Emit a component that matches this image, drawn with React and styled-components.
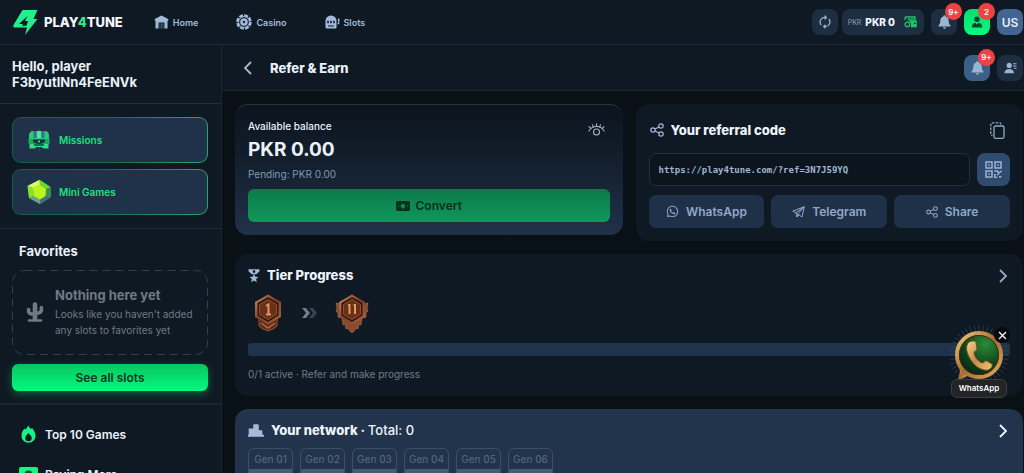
import React from "react";
import styled, { createGlobalStyle } from "styled-components";
import { FaWhatsapp } from "react-icons/fa";

const GlobalStyle = createGlobalStyle`
	* {
		box-sizing: border-box;
	}
	body {
		margin: 0;
		background-color: #091016;
		color: #e9f1fa;
		font-family: Inter, "Liberation Sans", sans-serif;
	}
	button,
	input {
		font-family: inherit;
		margin: 0;
	}
	svg {
		display: block;
		flex: none;
	}
`;

const Page = styled.div`
	display: flex;
	flex-direction: column;
	height: 100vh;
	overflow: hidden;
`;

/* header */
const Header = styled.header`
	display: flex;
	align-items: center;
	flex: none;
	height: 45px;
	padding: 0 1px 0 13px;
	background-color: #0f1923;
	border-bottom: 1px solid #1d2a37;
`;
const Logo = styled.a`
	display: flex;
	align-items: center;
	gap: 6px;
	color: #f4f8fc;
	font-size: 13px;
	font-weight: 800;
	text-decoration: none;
	span span {
		color: #2eea8b;
	}
`;
const Nav = styled.nav`
	display: flex;
	flex: 1;
	gap: 38px;
	margin-left: 31px;
`;
const NavLink = styled.a`
	display: flex;
	align-items: center;
	gap: 4px;
	color: #a3bbdb;
	font-size: 9px;
	font-weight: 600;
	text-decoration: none;
`;
const Actions = styled.div`
	display: flex;
	align-items: center;
	gap: 7px;
`;
const Wallet = styled.div`
	display: flex;
	gap: 4px;
`;
const IconButton = styled.button`
	position: relative;
	display: flex;
	align-items: center;
	justify-content: center;
	width: 26px;
	height: 26px;
	padding: 0;
	border: none;
	border-radius: 8px;
	background: ${(props) => props.$bg || "#1e2e41"};
	color: ${(props) => props.$color || "#9bb4d3"};
	font-size: 12px;
	font-weight: 600;
	cursor: pointer;
`;
const Balance = styled.button`
	display: flex;
	align-items: center;
	gap: 4px;
	height: 26px;
	padding: 0 7px 0 6px;
	border: none;
	border-radius: 8px;
	background-color: #1e2e41;
	color: #f1f6fc;
	font-size: 10px;
	font-weight: 800;
	cursor: pointer;
	small {
		color: #8ba0b8;
		font-size: 7px;
		font-weight: 400;
	}
	svg {
		margin-left: 5px;
	}
`;
const Badge = styled.span`
	position: absolute;
	top: -6px;
	right: -5px;
	display: flex;
	align-items: center;
	justify-content: center;
	width: 17px;
	height: 17px;
	border-radius: 50%;
	background-color: #ef4343;
	color: #fff;
	font-size: 8px;
	font-weight: 600;
`;

const Body = styled.div`
	display: flex;
	flex: 1;
	min-height: 0;
`;

/* sidebar */
const Sidebar = styled.aside`
	flex: none;
	width: 222px;
	overflow: auto;
	scrollbar-width: none;
	background-color: #0f1923;
	border-right: 1px solid #1a2733;
`;
const Greeting = styled.div`
	padding: 13px 13px 13px 12px;
	border-bottom: 1px solid #1f3040;
	font-size: 13px;
	font-weight: 700;
	line-height: 16px;
`;
const Promos = styled.div`
	display: flex;
	flex-direction: column;
	gap: 6px;
	padding: 13px 13px 13px 12px;
	border-bottom: 1px solid #1f2c39;
`;
const Promo = styled.button`
	display: flex;
	align-items: center;
	gap: 7px;
	height: 46px;
	padding: 0 13px;
	border: 1px solid transparent;
	border-radius: 9px;
	background: linear-gradient(#20314a, #20314a) padding-box,
		linear-gradient(90deg, #146040, #16704a 50%, #2ea36b) border-box;
	color: #1fe07d;
	font-size: 10px;
	font-weight: 600;
	cursor: pointer;
`;
const Favorites = styled.section`
	padding: 13px 13px 12px 12px;
	border-bottom: 2px solid #182634;
`;
const FavTitle = styled.h2`
	margin: 0 0 10px 7px;
	font-size: 13px;
	font-weight: 700;
	line-height: 18px;
`;
const Empty = styled.div`
	position: relative;
	display: flex;
	align-items: center;
	gap: 11px;
	height: 85px;
	padding: 0 14px 2px;
	color: #6f7984;
`;
const DashFrame = styled.svg`
	position: absolute;
	inset: 0;
	width: 100%;
	height: 100%;
	rect {
		width: calc(100% - 1px);
		height: calc(100% - 1px);
	}
`;
const EmptyText = styled.div`
	h3 {
		margin: 0;
		font-size: 13px;
		font-weight: 700;
		line-height: 18px;
	}
	p {
		margin: 2px 0 0;
		font-size: 10px;
		line-height: 16px;
		white-space: nowrap;
	}
`;
const SeeAll = styled.button`
	width: 100%;
	height: 27px;
	margin-top: 9px;
	border: none;
	border-radius: 6px;
	background: linear-gradient(#08c561, #04f97d);
	box-shadow: 0 3px 8px #04f97d55;
	color: #06351f;
	font-size: 12px;
	font-weight: 600;
	cursor: pointer;
`;
const Menu = styled.nav`
	padding: 9px 19px;
`;
const MenuLink = styled.a`
	display: flex;
	align-items: center;
	gap: 7px;
	height: 40px;
	color: #eaf2fb;
	font-size: 12px;
	font-weight: 600;
	text-decoration: none;
	svg {
		width: 19px;
	}
`;

/* main column */
const Main = styled.main`
	display: flex;
	flex: 1;
	flex-direction: column;
	min-width: 0;
`;
const SubHeader = styled.div`
	display: flex;
	align-items: center;
	flex: none;
	height: 46px;
	padding: 0 1px 0 18px;
	background-color: #0f1923;
	border-bottom: 1px solid #1b2936;
	h1 {
		flex: 1;
		margin: 0 0 0 14px;
		font-size: 13px;
		font-weight: 800;
	}
`;
const BackButton = styled.button`
	display: flex;
	width: 16px;
	padding: 0 3px;
	border: none;
	background: none;
	color: #a8b6c6;
	cursor: pointer;
`;
const Content = styled.div`
	display: flex;
	flex: 1;
	flex-direction: column;
	gap: 13px;
	padding: 13px 1px 13px 13px;
	overflow: auto;
	scrollbar-width: none;
`;
const Columns = styled.div`
	display: grid;
	grid-template-columns: 1fr 1fr;
	align-items: start;
	gap: 13px;
`;
const Card = styled.section`
	flex: none;
	padding: 13px;
	border-radius: 13px;
	background-color: ${(props) => props.$bg || "#0f1923"};
`;
const BalanceCard = styled(Card)`
	border-top: 1px solid #273543;
	background: linear-gradient(#0c141d, #142130 50%, #20314a);
`;
const BalanceTop = styled.div`
	display: flex;
	justify-content: space-between;
	font-size: 10px;
	font-weight: 500;
	line-height: 16px;
	svg {
		margin: 5px 5px 0 0;
		color: #9fb2c8;
	}
`;
const Amount = styled.div`
	margin-top: 1px;
	font-size: 19px;
	font-weight: 700;
	line-height: 26px;
`;
const Pending = styled.div`
	margin: 3px 0 7px;
	color: #8299b4;
	font-size: 10px;
	font-weight: 400;
	line-height: 16px;
`;
const Convert = styled.button`
	display: flex;
	align-items: center;
	justify-content: center;
	gap: 6px;
	width: 100%;
	height: 33px;
	border: none;
	border-radius: 6px;
	background: linear-gradient(#0d7a49, #0f985b);
	color: #06301f;
	font-size: 12px;
	font-weight: 600;
	cursor: pointer;
`;
const CardHead = styled.div`
	display: flex;
	align-items: center;
	gap: 7px;
	padding-right: 2px;
	color: #a3bbdb;
	h2 {
		flex: 1;
		margin: 0;
		color: #edf4fc;
		font-size: 13px;
		font-weight: 800;
		line-height: 17px;
	}
	h2 span {
		font-weight: 500;
	}
`;
const ReferralHead = styled(CardHead)`
	height: 26px;
	margin-bottom: 10px;
	padding: 0 5px 0 1px;
`;
const PlainButton = styled.button`
	display: flex;
	padding: 0;
	border: none;
	background: none;
	color: ${(props) => props.$color || "#8fa9c6"};
	cursor: pointer;
`;
const LinkRow = styled.div`
	display: flex;
	gap: 7px;
`;
const LinkInput = styled.input`
	flex: 1;
	min-width: 0;
	height: 33px;
	padding: 0 9px;
	border: 1px solid #223140;
	border-radius: 7px;
	outline: none;
	background-color: #0c151e;
	color: #9fb6d2;
	&& {
		font-family: "DejaVu Sans Mono", monospace;
		font-size: 9px;
		font-weight: 700;
	}
`;
const QrButton = styled(IconButton)`
	width: 33px;
	height: 33px;
`;
const ShareRow = styled.div`
	display: grid;
	grid-template-columns: repeat(3, 1fr);
	gap: 7px;
	margin-top: 9px;
`;
const ShareButton = styled.button`
	display: flex;
	align-items: center;
	justify-content: center;
	gap: 7px;
	height: 33px;
	padding: 0;
	border: none;
	border-radius: 7px;
	background-color: #1f3148;
	color: #8fa8c8;
	font-size: 12px;
	font-weight: 600;
	cursor: pointer;
`;
const Tiers = styled.div`
	display: flex;
	align-items: center;
	gap: 14px;
	height: 42px;
	margin: 8px 0 9px;
`;
const Track = styled.div`
	height: 13px;
	border-radius: 3px;
	background-color: #1f334a;
`;
const TierNote = styled.p`
	margin: 10px 0 0;
	color: #6f7b88;
	font-size: 10px;
	line-height: 17px;
`;
const Gens = styled.div`
	display: flex;
	gap: 7px;
	margin-top: 9px;
`;
const Gen = styled.div`
	width: 45px;
	overflow: hidden;
	border: 1px solid #3d4f65;
	border-radius: 6px;
	color: #52647a;
	font-size: 10px;
	font-weight: 500;
	line-height: 20px;
	text-align: center;
	&::after {
		content: "";
		display: block;
		height: 20px;
		background-color: #485b73;
	}
`;

/* floating chat */
const Chat = styled.div`
	position: fixed;
	right: 14px;
	bottom: 75px;
	display: flex;
	flex-direction: column;
	align-items: center;
	width: 62px;
`;
const ChatLink = styled.a`
	display: flex;
	flex-direction: column;
	align-items: center;
	color: #fff;
	text-decoration: none;
	span {
		z-index: 1;
		margin-top: -8px;
		padding: 0 7px;
		border: 1px solid #3b3d40;
		border-radius: 6px;
		background-color: #222426;
		font-size: 8px;
		font-weight: 600;
		line-height: 17px;
	}
`;
const ChatClose = styled.button`
	position: absolute;
	top: 4px;
	right: 0;
	display: flex;
	align-items: center;
	justify-content: center;
	width: 16px;
	height: 16px;
	padding: 0;
	border: none;
	border-radius: 50%;
	background-color: #07090b;
	color: #fff;
	cursor: pointer;
`;

const LogoMark = () => (
	<svg width="25" height="27" viewBox="0 0 25 27">
		<path
			fill="#24ee8c"
			fillRule="evenodd"
			d="M9.500 1h15l-4 9h4L12 26l2-7.500H1.500C0 18.500 0 17 .8 15.500zM14.500 7 6 15h4l-1 1.800h4.500L15 12h-3z"
		/>
	</svg>
);
const HomeIcon = () => (
	<svg width="15" height="14" viewBox="0 0 15 14" fill="currentColor">
		<path d="M7.5.4 14.2 4v1.8H.8V4z" />
		<path d="M1.5 5h12v8.6h-3V7.4h-6v6.2h-3z" />
		<path d="M5.4 8.3h1v5.3h-1zM7 8.3h1v5.3H7zM8.6 8.3h1v5.3h-1z" opacity=".4" />
	</svg>
);
const CasinoIcon = () => (
	<svg width="16" height="16" viewBox="0 0 16 16" fill="none" stroke="currentColor">
		<circle cx="8" cy="8" r="6.600" strokeWidth="2.400" strokeDasharray="4 1.184" />
		<circle cx="8" cy="8" r="5.400" strokeWidth="1" />
		<circle cx="8" cy="8" r="3.800" fill="currentColor" stroke="none" />
		<path d="m8 6.500 1.500 1.500L8 9.500 6.500 8z" fill="#0f1923" stroke="none" />
	</svg>
);
const SlotsIcon = () => (
	<svg width="15" height="14" viewBox="0 0 15 14" fill="currentColor">
		<path
			fillRule="evenodd"
			d="M.5 6a5.5 5.5 0 0 1 11 0v6.2c0 .9-.5 1.4-1.4 1.4H1.9c-.9 0-1.4-.5-1.4-1.400zM2.200 5.800v2.400h1.600V5.800zm3 0v2.400h1.600V5.800zm3 0v2.400h1.600V5.800zM3 10.400v1h6v-1z"
		/>
		<path d="M12.3 8.2h.8V5.1h1.2v4.100h-2z" />
		<circle cx="13.7" cy="4.600" r="1" />
	</svg>
);
const RefreshIcon = () => (
	<svg width="12" height="14" viewBox="0 0 12 14" fill="none" stroke="currentColor" strokeWidth="1.2">
		<path d="M2.2 10A4.6 4.6 0 0 1 6 2.4h1M9.8 4A4.6 4.6 0 0 1 6 11.6H5" />
		<path d="M5.5.6 7.4 2.4 5.5 4.2M6.5 9.8 4.6 11.6l1.9 1.8" />
	</svg>
);
const WalletIcon = () => (
	<svg width="13" height="12" viewBox="0 0 13 12">
		<path d="M1 4V2.2C1 1.4 1.4 1 2.2 1H11v2.2H3.5" fill="none" stroke="#1cc869" strokeWidth="1.3" />
		<path d="M4.5 4.2H12c.5 0 .8.3.8.8v5.2c0 .6-.4 1-1 1H7V8.4C7 6.5 5.8 5.5 4.5 5.200z" fill="#1cc869" />
		<circle cx="3.4" cy="8.4" r="2.3" fill="none" stroke="#1cc869" strokeWidth="1.3" />
		<path d="M9.8 6.7h2v1.4h-2z" fill="#1e2e41" />
	</svg>
);
const BellIcon = () => (
	<svg width="13" height="14" viewBox="0 0 13 14" fill="currentColor">
		<path d="M6.5.3c.7 0 1.2.5 1.2 1.2 1.9.5 3 2 3 4.1 0 2.7.6 3.8 1.7 4.7v1.3H.6v-1.3c1.1-.9 1.7-2 1.7-4.7 0-2.1 1.1-3.6 3-4.1 0-.7.5-1.200 1.200-1.200zM5 12.200h3c-.2 1-.7 1.500-1.500 1.500S5.200 13.200 5 12.200z" />
	</svg>
);
const UserIcon = () => (
	<svg width="12" height="12" viewBox="0 0 12 12" fill="#06452b">
		<circle cx="6" cy="3.2" r="2.7" />
		<path d="M.8 11.5c0-3 1.5-4.600 3.600-4.800L6 8.500l1.600-1.800c2.100.2 3.600 1.800 3.600 4.800z" />
	</svg>
);
const ContactsIcon = () => (
	<svg width="13" height="12" viewBox="0 0 13 12" fill="currentColor">
		<circle cx="5.2" cy="3.4" r="2.6" />
		<path d="M.4 11.3c0-2.7 1.8-4.3 4.8-4.300s4.800 1.600 4.800 4.300z" />
		<path d="M9 1.3h3.5v1H9zM9 3.500h3.500v1H9zM10 5.700h2.500v1H10z" />
	</svg>
);
const Chevron = ({ left }) => (
	<svg width="9" height="14" viewBox="0 0 9 14" fill="none" stroke="currentColor" strokeWidth="1.8">
		<path d={left ? "M8 1 2 7l6 6" : "m1 1 6 6-6 6"} />
	</svg>
);
const ChestIcon = () => (
	<svg width="26" height="26" viewBox="0 0 26 26">
		<path d="M13 1v24M1 13h24M5 5l16 16M21 5 5 21" stroke="#2d5c65" strokeWidth=".6" />
		<path d="M3 13V8.5C3 5.5 4.8 4 7 4h12c2.2 0 4 1.500 4 4.500V13z" fill="#25cd79" />
		<path d="M7.5 4h3.2v7H7.500zM15.300 4h3.200v7h-3.200z" fill="#45689a" />
		<path d="M11 4h4v7h-4z" fill="#49e99a" />
		<path d="M2.500 12h21v5h-21z" fill="#17aa63" />
		<path d="M7 12.500h12V15c-4 2.500-8 2.500-12 0z" fill="#0c3b36" />
		<path d="M3.500 17h19v4.500h-5l-2-1.500h-5l-2 1.500h-5z" fill="#39d98a" />
		<path d="M8 17h10v2H8z" fill="#13704c" />
		<circle cx="13" cy="14.500" r="1" fill="#6fe0a8" />
	</svg>
);
const GemIcon = () => (
	<svg width="26" height="26" viewBox="0 0 26 26">
		<path d="M13.5.8 24.5 8 25 18 14 25 3 19 1.500 7z" fill="#49a63d" />
		<path d="M13.500.8 14 6 7 9 1.500 7z" fill="#d8f86a" />
		<path d="M13.500.8 24.500 8 20 10 14 6z" fill="#67d82d" />
		<path d="M1.500 7 7 9l.7 8L3 19z" fill="#88df2c" />
		<path d="M24.500 8 25 18l-5.500-1 .5-7z" fill="#3c8c55" />
		<path d="m3 19 4.700-2 6.300 3.500V25z" fill="#6f9f87" />
		<path d="m25 18-11 7v-4.500l5.500-3.500z" fill="#426f82" />
		<path d="m14 6 6 4-.5 7-5.500 3.500L7.700 17 7 9z" fill="#bdf51b" />
	</svg>
);
const CactusIcon = () => (
	<svg width="18" height="20" viewBox="0 0 18 20" fill="none" stroke="currentColor" strokeLinecap="round">
		<path d="M9 2.5V17" strokeWidth="4.6" />
		<path d="M2.6 7.5V9c0 2 1.3 3 3.4 3h3M15.4 5.5V8c0 2-1.3 3-3.4 3H9" strokeWidth="3.6" />
		<path d="M3 18.5h12" strokeWidth="2.6" />
	</svg>
);
const FlameIcon = () => (
	<svg width="15" height="18" viewBox="0 0 15 18">
		<path
			fill="#13f584"
			fillRule="evenodd"
			d="M7.2.3c.6 2 2 2.7 2.8 3.8l1-1c2 2.3 3.5 4.9 3.5 7.7 0 4.2-3 6.9-7 6.9s-7-2.700-7-6.900C.5 7.500 2 5.500 3.400 3.600l1 1.200C5.200 3.300 6.800 2.500 7.200.3zM7.400 8c-1.800 2-3.100 3.300-3.100 5.100a3.200 3.200 0 0 0 6.400 0C10.700 11.300 9.200 10 7.400 8z"
		/>
	</svg>
);
const PayingIcon = () => (
	<svg width="19" height="15" viewBox="0 0 19 15">
		<rect width="19" height="15" rx="2" fill="#13f584" />
		<circle cx="9.5" cy="7.5" r="4" fill="#0b4d31" />
	</svg>
);
const EyeIcon = () => (
	<svg width="17" height="13" viewBox="0 0 17 13" fill="none" stroke="currentColor" strokeWidth="1.1" strokeLinecap="round">
		<path d="M1 8c1.500-2.900 4.200-4.500 7.500-4.500S14.500 5.100 16 8" />
		<path d="M8.500 3.500V.8M5.300 4.200 4.500 1.700M11.700 4.200l.8-2.500M2.800 5.500 1 3.700M14.200 5.500 16 3.700" />
		<circle cx="8.500" cy="9" r="3" />
	</svg>
);
const CashIcon = () => (
	<svg width="14" height="10" viewBox="0 0 14 10">
		<rect width="14" height="10" rx="1.5" fill="#06301f" />
		<circle cx="7" cy="5" r="2.2" fill="#0e8a52" />
		<path d="M7 5v3M2 5h1M11 5h1" stroke="#0e8a52" />
	</svg>
);
const ShareIcon = ({ size = 13 }) => (
	<svg width={size} height={size} viewBox="0 0 14 14" fill="none" stroke="currentColor" strokeWidth="1.2">
		<circle cx="3" cy="7" r="2.2" />
		<circle cx="11" cy="3" r="2.2" />
		<circle cx="11" cy="11" r="2.2" />
		<path d="m5 6 4-2M5 8l4 2" />
	</svg>
);
const CopyIcon = () => (
	<svg width="15" height="17" viewBox="0 0 15 17" fill="none" stroke="currentColor" strokeWidth="1.3">
		<rect x="4" y="4" width="10" height="12.3" rx="1.5" />
		<path d="M11 2.5C11 1.3 10.500.8 9.500.8H2.600C1.400.8.8 1.400.8 2.600v9c0 1.100.5 1.700 1.700 1.800" strokeDasharray="2.500 1.300" />
	</svg>
);
const QrIcon = () => (
	<svg width="17" height="17" viewBox="0 0 17 17" fill="none" stroke="currentColor" strokeWidth="1.5">
		<path d="M1 1h6v6H1zM10 1h6v6h-6zM1 10h6v6H1z" />
		<path d="M3.200 4h1.600M12.200 4h1.600M3.200 13h1.600" />
		<path d="M9.300 10h3l1.500 2 2.800-2M9.800 13v3.500h2.700M12 14l2-1.500M14 15.800h2.500" />
	</svg>
);
const TelegramIcon = () => (
	<svg width="13" height="12" viewBox="0 0 13 12" fill="none" stroke="currentColor" strokeLinejoin="round">
		<path d="M12.3.7.8 5.2l3.2 1.600 1 4.200 2-2.200 3 2.200z" />
		<path d="M12 .9 4 6.800M12 .9 6 7.700 5 11M6 7.700 7 8.800" />
	</svg>
);
const MedalIcon = () => (
	<svg width="12" height="14" viewBox="0 0 12 14" fill="currentColor">
		<path d="M.5.3h11v2L8.300 5.200H3.700L.5 2.300zM4.800 1.300v2.500h2.400V1.300z" fillRule="evenodd" />
		<path d="m6 4.800 1.300 2.900 3.200.3-2.400 2.100.7 3.200L6 11.600l-2.800 1.700.7-3.200L1.500 8l3.200-.3z" />
	</svg>
);
const PodiumIcon = () => (
	<svg width="16" height="13" viewBox="0 0 16 13" fill="currentColor">
		<path d="M.7 4.500h4.500V1.700C5.200.7 5.700.3 6.500.3h3c.8 0 1.300.4 1.300 1.400v4.500h3.500v4.600H16v1.900H0v-1.900h.7z" />
	</svg>
);
const TierBadge = ({ level }) => (
	<svg width="40" height="42" viewBox="0 0 40 42">
		<defs>
			<linearGradient id={`bronze-${level}`} x1="0" y1="0" x2="1" y2="1">
				<stop offset="0" stopColor="#c98a62" />
				<stop offset=".5" stopColor="#7c4027" />
				<stop offset="1" stopColor="#ad683f" />
			</linearGradient>
		</defs>
		{level === 2 && (
			<g fill="#8a4a2c" stroke="#b9754a" strokeWidth=".6">
				<path d="m4 11 4 1v14l-2-1v-4l-2-2 1-3zM36 11l-4 1v14l2-1v-4l2-2-1-3z" />
				<path d="m10 26 1 7 2-1 1 5 2-1 1 2 3 3 3-3 1-2 2 1 1-5 2 1 1-7z" />
			</g>
		)}
		{level === 1 && (
			<>
				<path d="M11 26v8l4 3 5 2 5-2 4-3v-8z" fill="#5c2c1b" stroke="#98552f" />
				<path d="m13 31 7 5 7-5" fill="none" stroke="#b06f46" strokeWidth="1.500" />
			</>
		)}
		<path d="M20 2.500 33 10v15l-13 7.500L7 25V10z" fill={`url(#bronze-${level})`} />
		<path d="m20 5 10.500 6v12.500L20 30 9.500 23.500V11z" fill="#35150e" />
		<path d="m20 7.500 8.500 5v10l-8.500 5-8.500-5v-10z" fill="#6a3119" stroke="#93522f" />
		<path
			d={level === 1 ? "M18 14l2.500-1.500V22M18 22.500h5" : "M16 13h1.500v9M21.500 13H23v9"}
			fill="none"
			stroke="#d99c66"
			strokeWidth="2"
		/>
	</svg>
);
const NextTierIcon = () => (
	<svg width="16" height="12" viewBox="0 0 16 12">
		<path d="M7 1h4l4 5-4 5H7l4-5z" fill="#354352" />
		<path d="M0 1h4l4 5-4 5H0l4-5z" fill="#6f7e8f" />
	</svg>
);
const rays = Array.from({ length: 40 }, (_, i) => i * 9);
const ChatArt = () => (
	<svg width="62" height="64" viewBox="0 0 62 64">
		<defs>
			<radialGradient id="chat-green" cx=".65" cy=".25" r=".75">
				<stop offset="0" stopColor="#2c8c36" />
				<stop offset=".6" stopColor="#0f4a20" />
				<stop offset="1" stopColor="#072612" />
			</radialGradient>
			<linearGradient id="chat-gold" x1="0" y1="0" x2="1" y2="1">
				<stop offset="0" stopColor="#f0cb7e" />
				<stop offset=".5" stopColor="#a66a30" />
				<stop offset="1" stopColor="#e0ae5c" />
			</linearGradient>
			<linearGradient id="chat-phone" x1="0" y1="0" x2="1" y2="1">
				<stop offset="0" stopColor="#f6d68c" />
				<stop offset=".5" stopColor="#c48a48" />
				<stop offset="1" stopColor="#f2c671" />
			</linearGradient>
		</defs>
		<g stroke="#33495c" strokeWidth="1" opacity=".6">
			{rays.map((deg) => (
				<path key={deg} d="M31 2v8" transform={`rotate(${deg} 31 32)`} />
			))}
		</g>
		<path d="M10 40c3 6 2 11 0 16 5 0 8-2 12-5z" fill="url(#chat-gold)" />
		<circle cx="31" cy="32" r="22" fill="url(#chat-green)" stroke="url(#chat-gold)" strokeWidth="4" />
		<circle cx="31" cy="32" r="19.500" fill="none" stroke="#4a2a10" />
		<path
			d="M20 20c2-2 6-3 8-1l1 7c0 2-3 2-3 4 1 5 4 8 8 10 2 0 3-3 5-2l5 3c1 2-1 5-4 6-4 1-11-2-15-7s-9-14-5-20z"
			fill="url(#chat-phone)"
			stroke="#7a4a1c"
		/>
	</svg>
);
const CloseIcon = () => (
	<svg width="9" height="9" viewBox="0 0 9 9" stroke="currentColor" strokeWidth="1.2">
		<path d="m1 1 7 7M8 1 1 8" />
	</svg>
);

const gens = ["01", "02", "03", "04", "05", "06"];

const App = () => {
	return (
		<Page>
			<GlobalStyle />
			<Header>
				<Logo href="#">
					<LogoMark />
					<span>
						PLAY<span>4</span>TUNE
					</span>
				</Logo>
				<Nav>
					<NavLink href="#home">
						<HomeIcon />
						Home
					</NavLink>
					<NavLink href="#casino">
						<CasinoIcon />
						Casino
					</NavLink>
					<NavLink href="#slots">
						<SlotsIcon />
						Slots
					</NavLink>
				</Nav>
				<Actions>
					<Wallet>
						<IconButton aria-label="Refresh balance">
							<RefreshIcon />
						</IconButton>
						<Balance>
							<small>PKR</small>
							PKR 0
							<WalletIcon />
						</Balance>
					</Wallet>
					<IconButton aria-label="Notifications">
						<BellIcon />
						<Badge>9+</Badge>
					</IconButton>
					<IconButton aria-label="Account" $bg="linear-gradient(#0bdc6e, #04fb7e)">
						<UserIcon />
						<Badge>2</Badge>
					</IconButton>
					<IconButton $bg="#416590" $color="#e6effa">
						US
					</IconButton>
				</Actions>
			</Header>
			<Body>
				<Sidebar>
					<Greeting>
						Hello, player
						<br />
						F3byutlNn4FeENVk
					</Greeting>
					<Promos>
						<Promo>
							<ChestIcon />
							Missions
						</Promo>
						<Promo>
							<GemIcon />
							Mini Games
						</Promo>
					</Promos>
					<Favorites>
						<FavTitle>Favorites</FavTitle>
						<Empty>
							<DashFrame>
								<rect x=".5" y=".5" rx="12" fill="none" stroke="#33404c" strokeDasharray="8 5" />
							</DashFrame>
							<CactusIcon />
							<EmptyText>
								<h3>Nothing here yet</h3>
								<p>
									Looks like you haven't added
									<br />
									any slots to favorites yet
								</p>
							</EmptyText>
						</Empty>
						<SeeAll>See all slots</SeeAll>
					</Favorites>
					<Menu>
						<MenuLink href="#top">
							<FlameIcon />
							Top 10 Games
						</MenuLink>
						<MenuLink href="#paying">
							<PayingIcon />
							Paying More
						</MenuLink>
					</Menu>
				</Sidebar>
				<Main>
					<SubHeader>
						<BackButton aria-label="Back">
							<Chevron left />
						</BackButton>
						<h1>Refer &amp; Earn</h1>
						<Actions>
							<IconButton aria-label="Notifications" $bg="#3c5f88">
								<BellIcon />
								<Badge>9+</Badge>
							</IconButton>
							<IconButton aria-label="Contacts">
								<ContactsIcon />
							</IconButton>
						</Actions>
					</SubHeader>
					<Content>
						<Columns>
							<BalanceCard>
								<BalanceTop>
									Available balance
									<PlainButton aria-label="Hide balance">
										<EyeIcon />
									</PlainButton>
								</BalanceTop>
								<Amount>PKR 0.00</Amount>
								<Pending>Pending: PKR 0.00</Pending>
								<Convert>
									<CashIcon />
									Convert
								</Convert>
							</BalanceCard>
							<Card>
								<ReferralHead>
									<ShareIcon size={14} />
									<h2>Your referral code</h2>
									<PlainButton aria-label="Copy link">
										<CopyIcon />
									</PlainButton>
								</ReferralHead>
								<LinkRow>
									<LinkInput
										aria-label="Referral link"
										readOnly
										value="https://play4tune.com/?ref=3N7J59YQ"
									/>
									<QrButton aria-label="QR code" $bg="#2f4c6e">
										<QrIcon />
									</QrButton>
								</LinkRow>
								<ShareRow>
									<ShareButton>
										<FaWhatsapp size={13} />
										WhatsApp
									</ShareButton>
									<ShareButton>
										<TelegramIcon />
										Telegram
									</ShareButton>
									<ShareButton>
										<ShareIcon size={12} />
										Share
									</ShareButton>
								</ShareRow>
							</Card>
						</Columns>
						<Card>
							<CardHead>
								<MedalIcon />
								<h2>Tier Progress</h2>
								<PlainButton aria-label="Open tiers">
									<Chevron />
								</PlainButton>
							</CardHead>
							<Tiers>
								<TierBadge level={1} />
								<NextTierIcon />
								<TierBadge level={2} />
							</Tiers>
							<Track role="progressbar" aria-label="Tier progress" aria-valuenow={0} aria-valuemax={1} />
							<TierNote>0/1 active · Refer and make progress</TierNote>
						</Card>
						<Card $bg="#21344c">
							<CardHead>
								<PodiumIcon />
								<h2>
									Your network · <span>Total: 0</span>
								</h2>
								<PlainButton aria-label="Open network" $color="#f1f6fc">
									<Chevron />
								</PlainButton>
							</CardHead>
							<Gens>
								{gens.map((gen) => (
									<Gen key={gen}>Gen {gen}</Gen>
								))}
							</Gens>
						</Card>
					</Content>
				</Main>
			</Body>
			<Chat>
				<ChatLink href="#chat">
					<ChatArt />
					<span>WhatsApp</span>
				</ChatLink>
				<ChatClose aria-label="Close">
					<CloseIcon />
				</ChatClose>
			</Chat>
		</Page>
	);
};

export default App;
